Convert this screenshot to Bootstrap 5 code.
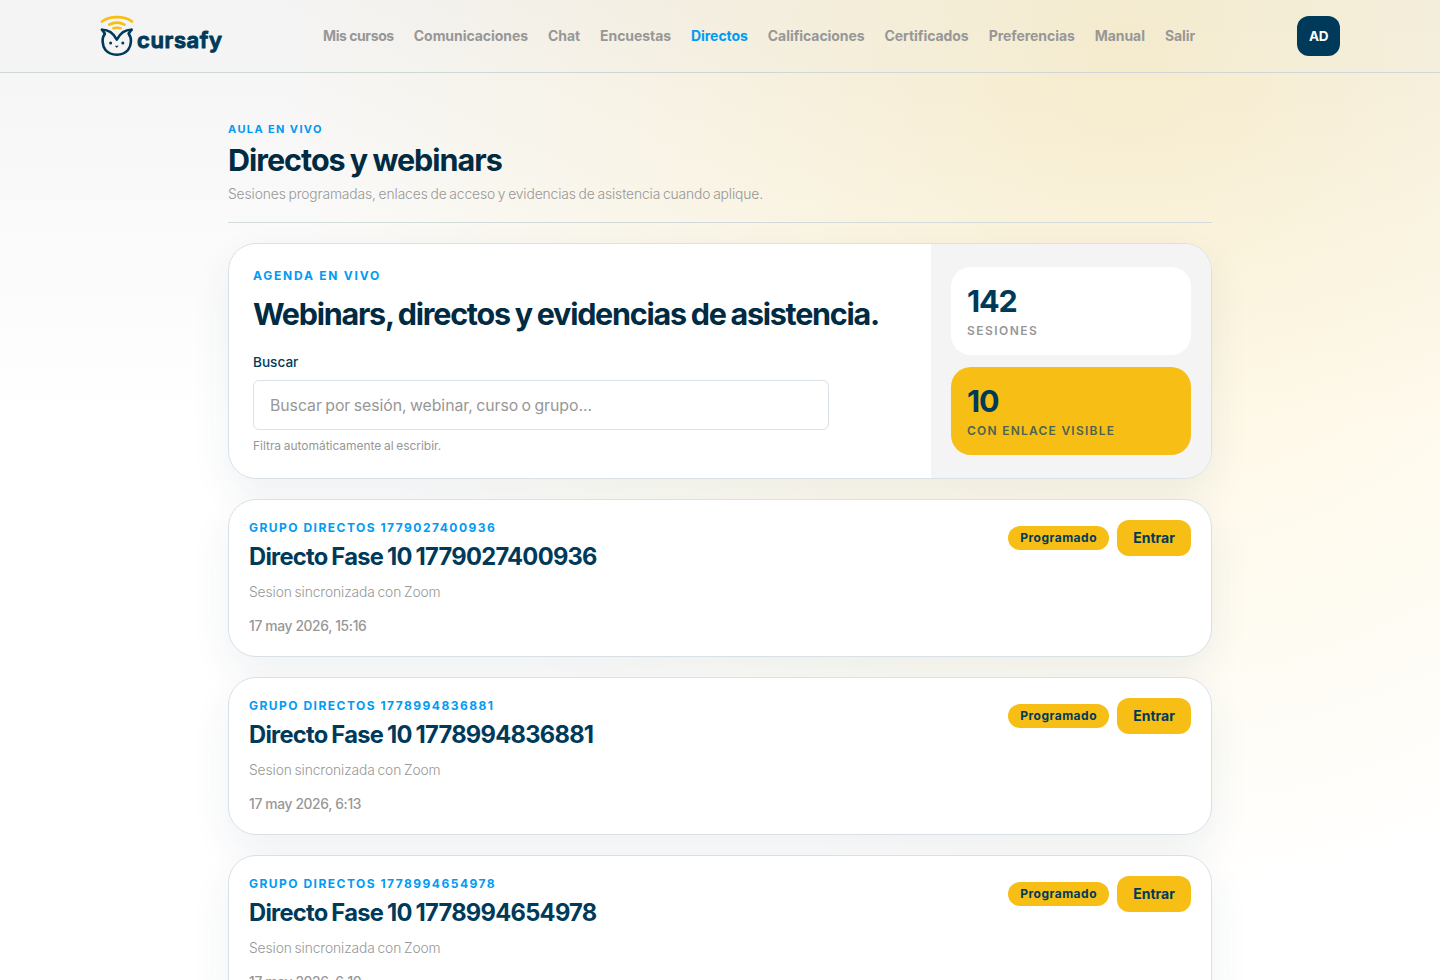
<!DOCTYPE html>
<html lang="es">
<head>
<meta charset="utf-8">
<meta name="viewport" content="width=device-width, initial-scale=1">
<title>Directos y webinars | Cursafy</title>
<link href="https://cdn.jsdelivr.net/npm/bootstrap@5.3.0/dist/css/bootstrap.min.css" rel="stylesheet">
<style>
:root{--navy:#003a5a;--ink:#002b42;--sky:#009bf2;--sun:#f7be16;--mute:#979797;--edge:#d9e1e7}
html,body{height:980px;overflow:hidden}
body{font-family:Inter,"Liberation Sans",sans-serif;color:var(--navy);
background:radial-gradient(circle at 1128px 60px,rgba(247,190,22,.18),transparent 850px),linear-gradient(180deg,#f4f4f4,#fff 420px)}
.topbar{height:73px;border-bottom:1px solid #ced7d5;background:rgba(244,244,244,.06)}
.topbar-inner{width:1240px}
.menu{gap:20px;font-size:14px;font-weight:700;line-height:20px;letter-spacing:-.06px;margin-left:99px}
.menu a{color:var(--mute);text-decoration:none;white-space:nowrap}
.menu a:first-child{letter-spacing:-.38px;word-spacing:-.3px}
.menu a.active{color:var(--sky)}
.avatar{width:43px;height:40px;border-radius:12px;background:var(--navy);font-size:13.5px;font-weight:700;letter-spacing:-.4px}
.page{width:984px;padding-top:48px}
.eyebrow{color:var(--sky);font-weight:700;font-size:12px;line-height:16px;letter-spacing:1.48px}
.head{height:102px;border-bottom:1px solid #d2dada;margin-bottom:20px}
.head .eyebrow{font-size:11px;letter-spacing:1.38px}
.title{font-size:30.5px;font-weight:700;line-height:38px;letter-spacing:-1.01px;word-spacing:-1px;color:var(--ink)}
.lede{font-size:13.8px;font-weight:300;line-height:20px;word-spacing:-1px;letter-spacing:-.1px;margin-top:5px;color:var(--mute)}
.panel{background:#fff;border:1px solid var(--edge);border-radius:28px;box-shadow:0 16px 40px rgba(0,58,90,.07);margin-bottom:20px}
.hero{height:236px}
.hero-main{padding:24px}
.hero-main .eyebrow{letter-spacing:1.77px}
.hero-title{font-size:30.5px;font-weight:700;line-height:38px;letter-spacing:-1.26px;word-spacing:-1px;color:var(--ink);margin-top:11px}
.field-label{font-size:13.6px;font-weight:500;line-height:20px;margin-top:19px}
.search{width:576px;height:50px;margin-top:8px;border:1px solid var(--edge);border-radius:6px;padding:0 16px;font-size:15.8px;word-spacing:-1px;letter-spacing:-.03px;background:#fff}
.search::placeholder{color:var(--mute);opacity:1}
.hint{font-size:12px;line-height:16px;margin-top:8px;letter-spacing:-.03px;word-spacing:-.7px;color:var(--mute)}
.hero-side{width:280px;background:#f4f4f4;padding:20px;gap:12px}
.stat{height:88px;border-radius:20px;background:#fff;padding:16px}
.stat-sun{background:var(--sun)}
.stat-num{font-size:30.5px;font-weight:700;line-height:36px;letter-spacing:-1.1px}
.stat-cap{font-size:12px;font-weight:600;line-height:16px;margin-top:4px;letter-spacing:1.46px;color:var(--mute)}
.stat-sun .stat-cap{color:#4d6350;letter-spacing:1.24px}
.session{height:158px;padding:20px}
.session-title{font-size:23.7px;font-weight:700;line-height:32px;letter-spacing:-.72px;word-spacing:-1.1px;margin-top:5px}
.session .lede{margin-top:9px}
.when{font-size:13.8px;font-weight:500;line-height:20px;margin-top:14px;letter-spacing:-.34px;color:var(--mute)}
.state{height:24px;padding:0 12px;background:var(--sun);font-size:12px;font-weight:700;letter-spacing:.5px}
.enter{width:74px;height:36px;border-radius:12px;background:var(--sun);font-size:14px;font-weight:700;padding:0 0 2px;border:0;color:var(--navy)}
</style>
</head>
<body>
<header class="topbar d-flex justify-content-center">
 <div class="topbar-inner d-flex align-items-center">
  <a href="#" aria-label="Cursafy" class="d-block lh-1">
   <svg class="d-block" width="124" height="44" viewBox="100 14 124 44" fill="none" stroke-linecap="round" stroke-linejoin="round">
    <g stroke="#f7be16" stroke-width="2.6"><path d="M102 21.600C109 15.700 125 15.700 132 21.600"/><path d="M109.200 24.700Q117 20.600 124.500 24.700"/><path d="M113.400 28.200Q117 27.400 120.600 28.200"/></g>
    <g stroke="#003a5a" stroke-width="2.6"><path d="M102 29.800C107.500 29.700 113 32.500 116.800 39.600C120.600 32.500 126 29.700 131.500 29.800"/><path d="M102 29.800L104.900 33.600C101.500 38 102 45 105.500 50C108.500 53.500 112.500 54.700 116.800 54.700C121 54.700 125 53.500 128 50C131.700 45 132 38 128.600 33.600L131.500 29.800"/></g>
    <circle cx="110.600" cy="43" r="1.500" fill="#003a5a"/><circle cx="122.800" cy="43" r="1.500" fill="#003a5a"/><path d="M114.900 45.800H118.600L116.800 47.900Z" fill="#003a5a"/>
    <text x="137" y="47.500" font-family="Inter, sans-serif" font-size="22" font-weight="600" textLength="85" fill="#003a5a" stroke="#003a5a" stroke-width="1">cursafy</text>
   </svg>
  </a>
  <nav class="menu d-flex">
   <a href="#">Mis cursos</a><a href="#">Comunicaciones</a><a href="#">Chat</a><a href="#">Encuestas</a><a href="#" class="active">Directos</a><a href="#">Calificaciones</a><a href="#">Certificados</a><a href="#">Preferencias</a><a href="#">Manual</a><a href="#">Salir</a>
  </nav>
  <div class="avatar ms-auto d-flex align-items-center justify-content-center text-white">AD</div>
 </div>
</header>
<main class="page mx-auto">
 <div class="head">
  <div class="eyebrow">AULA EN VIVO</div>
  <h1 class="title mb-0 mt-1">Directos y webinars</h1>
  <p class="lede mb-0">Sesiones programadas, enlaces de acceso y evidencias de asistencia cuando aplique.</p>
 </div>
 <section class="panel hero d-flex overflow-hidden">
  <div class="hero-main flex-grow-1">
   <div class="eyebrow">AGENDA EN VIVO</div>
   <h2 class="hero-title mb-0">Webinars, directos y evidencias de asistencia.</h2>
   <label class="field-label d-block" for="q">Buscar</label>
   <input id="q" class="search d-block" placeholder="Buscar por sesión, webinar, curso o grupo...">
   <div class="hint">Filtra automáticamente al escribir.</div>
  </div>
  <aside class="hero-side d-flex flex-column justify-content-center">
   <div class="stat"><div class="stat-num">142</div><div class="stat-cap">SESIONES</div></div>
   <div class="stat stat-sun"><div class="stat-num">10</div><div class="stat-cap">CON ENLACE VISIBLE</div></div>
  </aside>
 </section>
 <article class="panel session d-flex justify-content-between align-items-start">
  <div><div class="eyebrow">GRUPO DIRECTOS 1779027400936</div><h3 class="session-title mb-0">Directo Fase 10 1779027400936</h3><p class="lede mb-0">Sesion sincronizada con Zoom</p><div class="when">17 may 2026, 15:16</div></div>
  <div class="d-flex align-items-center gap-2"><span class="state rounded-pill d-flex align-items-center">Programado</span><button class="btn enter">Entrar</button></div>
 </article>
 <article class="panel session d-flex justify-content-between align-items-start">
  <div><div class="eyebrow">GRUPO DIRECTOS 1778994836881</div><h3 class="session-title mb-0">Directo Fase 10 1778994836881</h3><p class="lede mb-0">Sesion sincronizada con Zoom</p><div class="when">17 may 2026, 6:13</div></div>
  <div class="d-flex align-items-center gap-2"><span class="state rounded-pill d-flex align-items-center">Programado</span><button class="btn enter">Entrar</button></div>
 </article>
 <article class="panel session d-flex justify-content-between align-items-start">
  <div><div class="eyebrow">GRUPO DIRECTOS 1778994654978</div><h3 class="session-title mb-0">Directo Fase 10 1778994654978</h3><p class="lede mb-0">Sesion sincronizada con Zoom</p><div class="when">17 may 2026, 6:10</div></div>
  <div class="d-flex align-items-center gap-2"><span class="state rounded-pill d-flex align-items-center">Programado</span><button class="btn enter">Entrar</button></div>
 </article>
</main>
</body>
</html>
